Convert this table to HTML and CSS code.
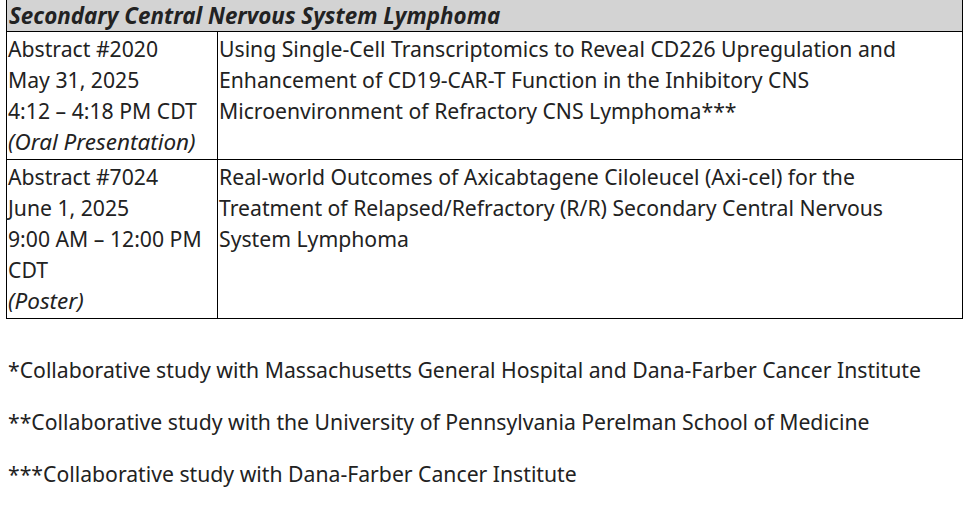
FILE: index.html
```html
<!DOCTYPE html>
<html>
<head>
<meta charset="utf-8">
<link rel="stylesheet" href="styles.css">
</head>
<body>
<table class="sched">
  <tr class="head">
    <th colspan="2">Secondary Central Nervous System Lymphoma</th>
  </tr>
  <tr>
    <td class="meta">Abstract #2020<br>May 31, 2025<br>4:12 – 4:18 PM CDT<br><em>(Oral Presentation)</em></td>
    <td class="title">Using Single-Cell Transcriptomics to Reveal CD226 Upregulation and Enhancement of CD19-CAR-T Function in the Inhibitory CNS Microenvironment of Refractory CNS Lymphoma***</td>
  </tr>
  <tr>
    <td class="meta">Abstract #7024<br>June 1, 2025<br>9:00 AM – 12:00 PM CDT<br><em>(Poster)</em></td>
    <td class="title">Real-world Outcomes of Axicabtagene Ciloleucel (Axi-cel) for the Treatment of Relapsed/Refractory (R/R) Secondary Central Nervous System Lymphoma</td>
  </tr>
</table>
<div class="notes">
  <p>*Collaborative study with Massachusetts General Hospital and Dana-Farber Cancer Institute</p>
  <p>**Collaborative study with the University of Pennsylvania Perelman School of Medicine</p>
  <p>***Collaborative study with Dana-Farber Cancer Institute</p>
</div>
</body>
</html>
```
FILE: styles.css
```css
html, body {
  margin: 0;
  padding: 0;
  background: #fff;
}
body {
  padding: 0 9px 0 6px;
  font-family: "Noto Sans", sans-serif;
  font-size: 21.2px;
  line-height: 31px;
  color: #222;
}
.sched {
  width: 957px;
  border-collapse: collapse;
  margin-top: -2px;
}
.sched th, .sched td {
  border: 1.5px solid #000;
  vertical-align: top;
  text-align: left;
  padding: 1px 0 2px 1px;
}
.head th {
  background: #d3d3d3;
  font-weight: 700;
  font-style: italic;
  font-size: 22.4px;
  padding: 1px 0 0 2px;
  height: 31px;
}
.meta {
  width: 209px;
}
.sched .title {
  padding-right: 30px;
}
.sched em {
  font-style: italic;
  font-size: 1.06em;
}
.notes {
  padding-top: 35px;
}
.notes p {
  margin: 0 0 21px 2px;
}
```
